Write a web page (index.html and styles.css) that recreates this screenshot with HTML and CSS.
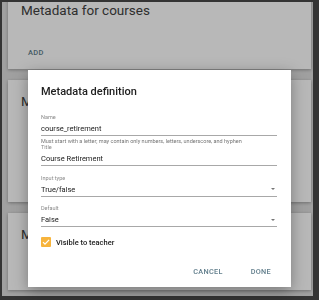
FILE: index.html
```html
<!DOCTYPE html>
<html lang="en">
<head>
    <meta charset="UTF-8">
    <meta name="viewport" content="width=device-width, initial-scale=1.0">
    <title>Metadata for courses</title>
    <link rel="stylesheet" href="styles.css">
</head>
<body>

    <div class="page">
        <div class="card-list">
            <div class="card card-courses">
                <div class="card-title">Metadata for courses</div>
                <button class="text-btn add-btn">ADD</button>
            </div>
            <div class="card card-assignments">
                <div class="card-title">Metadata for assignments</div>
            </div>
            <div class="card card-users">
                <div class="card-title">Metadata for users</div>
            </div>
        </div>
    </div>

    <div class="backdrop"></div>

    <div class="dialog">
        <div class="dialog-title">Metadata definition</div>

        <div class="fields">
            <div class="field">
                <div class="field-label">Name</div>
                <div class="field-value">course_retirement</div>
                <div class="field-hint">Must start with a letter; may contain only numbers, letters, underscore, and hyphen</div>
            </div>
            <div class="field">
                <div class="field-label">Title</div>
                <div class="field-value">Course Retirement</div>
                <div class="field-hint"></div>
            </div>
            <div class="field">
                <div class="field-label">Input type</div>
                <div class="field-value select">True/false<span class="arrow"></span></div>
                <div class="field-hint"></div>
            </div>
            <div class="field">
                <div class="field-label">Default</div>
                <div class="field-value select">False<span class="arrow"></span></div>
                <div class="field-hint"></div>
            </div>
        </div>

        <label class="check-row">
            <span class="checkbox">
                <svg width="10" height="10" viewBox="0 0 10 10">
                    <path d="M2 5.1 L4 7.1 L8.1 2.9" fill="none" stroke="#fff" stroke-width="1.3"/>
                </svg>
            </span>
            <span class="check-label">Visible to teacher</span>
        </label>

        <div class="actions">
            <button class="text-btn">CANCEL</button>
            <button class="text-btn">DONE</button>
        </div>
    </div>

</body>
</html>
```

FILE: styles.css
```css
body {
    margin: 0;
    height: 300px;
    overflow: hidden;
    background: #484848;
    font-family: Roboto, "Noto Sans", sans-serif;
}
.page {
    margin: 2px 6px 0 2px;
    height: 294px;
    overflow: hidden;
    background: #dedede;
}
.card-list {
    margin-top: -13px;
    display: flex;
    flex-direction: column;
    gap: 11px;
}
.card {
    margin: 0 2px 0 6px;
    background: #fff;
    box-shadow: 0 1px 3px rgba(0,0,0,0.3);
    padding: 13px 13px 0 13px;
    box-sizing: border-box;
}
.card-courses {
    height: 80px;
}
.card-assignments {
    height: 122px;
}
.card-users {
    height: 77px;
}
.card-title {
    font-size: 13.5px;
    line-height: 16px;
    color: #424242;
}
.text-btn {
    border: none;
    background: none;
    font-family: inherit;
    font-size: 7.3px;
    font-weight: 500;
    letter-spacing: 0.3px;
    color: #607d8b;
    padding: 0 6px;
    height: 20px;
}
.add-btn {
    margin-top: 24px;
    margin-left: 1px;
    padding: 0 6px;
    font-size: 7.5px;
}
.backdrop {
    position: fixed;
    inset: 0;
    background: rgba(0,0,0,0.28);
}
.dialog {
    position: absolute;
    left: 28px;
    top: 70px;
    width: 263px;
    height: 217px;
    box-sizing: border-box;
    padding: 15px 14px 6px 13px;
    background: #fff;
    box-shadow: 0 4px 14px rgba(0,0,0,0.35);
}
.dialog-title {
    font-size: 11px;
    line-height: 14px;
    font-weight: 500;
    color: #212121;
}
.fields {
    margin-top: 14.5px;
}
.field-label {
    font-size: 5.5px;
    line-height: 7px;
    color: #8a8a8a;
}
.field-value {
    margin-top: 2px;
    font-size: 7.5px;
    line-height: 11px;
    padding-bottom: 1px;
    color: #212121;
    border-bottom: 1px solid #a8a8a8;
}
.select {
    display: flex;
    align-items: center;
    justify-content: space-between;
}
.arrow {
    width: 0;
    height: 0;
    margin-right: 2px;
    border-left: 2.5px solid transparent;
    border-right: 2.5px solid transparent;
    border-top: 2.5px solid #757575;
}
.field-hint {
    margin-top: 2.5px;
    height: 6px;
    font-size: 5.5px;
    line-height: 6px;
    color: #757575;
    white-space: nowrap;
}
.check-row {
    margin-top: 1.5px;
    display: flex;
    align-items: center;
    gap: 5px;
}
.checkbox {
    width: 10px;
    height: 10px;
    border-radius: 1px;
    background: #f7b43c;
    display: flex;
}
.check-label {
    font-size: 7.5px;
    font-weight: 500;
    color: #212121;
}
.actions {
    margin-top: 14px;
    display: flex;
    justify-content: flex-end;
    gap: 16px;
}
```
